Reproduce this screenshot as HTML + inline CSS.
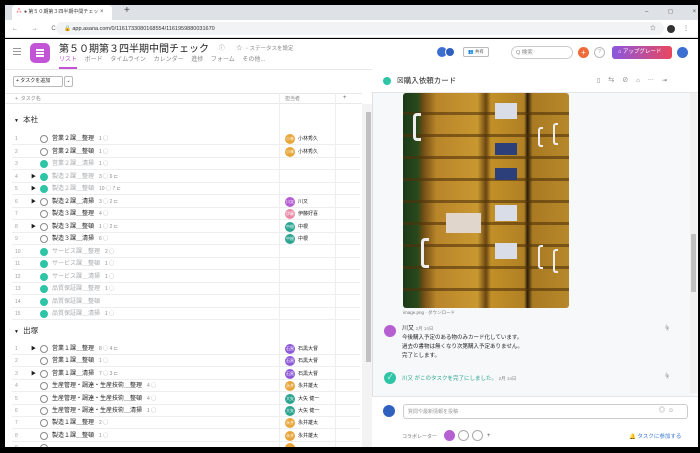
<!DOCTYPE html>
<html style="overflow:hidden;width:700px;height:453px"><head><meta charset="utf-8"><style>
*{margin:0;padding:0;box-sizing:border-box}
body{width:700px;height:453px;overflow:hidden;background:#000;position:relative;font-family:"Liberation Sans","Noto Sans CJK JP",sans-serif;color:#1e1f21}
.a{position:absolute;white-space:nowrap}
.t{font-size:6px;line-height:8px}
.row{position:absolute;left:12px;width:348px;height:12px;border-bottom:1px solid #eceef0;font-size:6px;line-height:12px}
.row .n{position:absolute;left:3px;color:#9ca0a4;font-size:5px}
.row .ar{position:absolute;left:19px;font-size:5px}
.row .ck{position:absolute;left:28px;top:2px;width:8px;height:8px;border-radius:50%;border:1px solid #8a8b8c}
.row .ck.d{background:#2ec4a6;border-color:#2ec4a6}
.row .nm{position:absolute;left:40px}
.row.g .nm{color:#a8abae}
.row .c{color:#8a8d90;margin-left:5px;font-size:5px}
.row .av{position:absolute;left:273px;top:1px;width:10px;height:10px;border-radius:50%;font-size:4px;color:#fff;text-align:center;line-height:10px}
.row .an{position:absolute;left:286px;font-size:5px}
.vl{position:absolute;width:1px;background:#eceef0}
.o{background:#e8a53a}.p{background:#b65fd3}.k{background:#e88aa8}.tl{background:#2aa38f}.pu{background:#8e5ad8}
</style></head><body>
<div class="a" style="left:5px;top:5px;width:693px;height:15px;background:#dee1e6"></div>
<div class="a" style="left:12px;top:5px;width:100px;height:15px;background:#fff;border-radius:4px 4px 0 0"></div>
<div class="a t" style="left:16px;top:8px;color:#e8384f">⁂</div>
<div class="a t" style="left:24px;top:8px;font-size:5px;color:#444">● 第５０期第３四半期中間チェッ</div>
<div class="a t" style="left:100px;top:8px;color:#555">×</div>
<div class="a" style="left:124px;top:5px;font-size:10px;color:#444">+</div>
<div class="a t" style="left:645px;top:8px;color:#555;letter-spacing:9px">– ◻ ×</div>
<div class="a" style="left:5px;top:20px;width:693px;height:18px;background:#fff;border-bottom:1px solid #ddd"></div>
<div class="a t" style="left:12px;top:25px;color:#666;letter-spacing:6px">← → C</div>
<div class="a" style="left:56px;top:22px;width:608px;height:13px;background:#f1f3f4;border-radius:7px"></div>
<div class="a t" style="left:64px;top:25px;font-size:5.5px;color:#333">🔒 app.asana.com/0/1161733080168554/1161959880031670</div>
<div class="a t" style="left:650px;top:25px;color:#555">☆</div>
<div class="a" style="left:667px;top:25px;width:8px;height:8px;border-radius:50%;background:#333"></div>
<div class="a t" style="left:683px;top:25px;color:#555">⋮</div>
<div class="a" style="left:5px;top:39px;width:693px;height:408px;background:#fff"></div>
<div class="a" style="left:13px;top:48px;width:8px;height:1px;background:#999;box-shadow:0 3px #999,0 6px #999"></div>
<div class="a" style="left:30px;top:43px;width:20px;height:20px;border-radius:5px;background:#c255d6"></div>
<div class="a" style="left:36px;top:49px;width:8px;height:1.5px;background:#fff;box-shadow:0 3px #fff,0 6px #fff"></div>
<div class="a" style="left:59px;top:43px;font-size:10px;line-height:13px">第５０期第３四半期中間チェック</div>
<div class="a t" style="left:202px;top:45px;color:#888;letter-spacing:5px">⌄ ⓘ ☆</div>
<div class="a t" style="left:246px;top:45px;color:#888;font-size:5.5px">◦ ステータスを設定</div>
<div class="a t" style="left:59px;top:56px;font-size:6px;color:#888;word-spacing:6px"><span style="color:#c255d6">リスト</span> ボード タイムライン カレンダー 進捗 フォーム その他...</div>
<div class="a" style="left:59px;top:67px;width:18px;height:2px;background:#c255d6"></div>
<div class="a" style="left:5px;top:69px;width:367px;height:1px;background:#e8e8e8"></div>
<div class="a" style="left:437px;top:47px;width:10px;height:10px;border-radius:50%;background:#3d6fd1"></div>
<div class="a" style="left:445px;top:47px;width:10px;height:10px;border-radius:50%;background:#2f5fbf;border:1px solid #fff"></div>
<div class="a t" style="left:463px;top:47px;width:26px;height:10px;border:1px solid #bbb;border-radius:2px;font-size:4.5px;text-align:center;line-height:8px;color:#555">👥 共有</div>
<div class="a" style="left:511px;top:46px;width:62px;height:13px;border:1px solid #ccc;border-radius:7px"></div>
<div class="a t" style="left:516px;top:49px;font-size:5.5px;color:#888">Q 検索</div>
<div class="a" style="left:578px;top:47px;width:11px;height:11px;border-radius:50%;background:#f06a3a;color:#fff;font-size:8px;text-align:center;line-height:11px">+</div>
<div class="a" style="left:594px;top:47px;width:11px;height:11px;border-radius:50%;border:1px solid #bbb;color:#999;font-size:5px;text-align:center;line-height:9px">?</div>
<div class="a" style="left:612px;top:46px;width:60px;height:13px;border-radius:3px;background:linear-gradient(90deg,#8a57e0,#e9475e);color:#fff;font-size:5.5px;line-height:13px;padding-left:6px">⌂ アップグレード</div>
<div class="a" style="left:677px;top:47px;width:11px;height:11px;border-radius:50%;background:#3d6fd1"></div>
<div class="a t" style="left:13px;top:76px;width:50px;height:11px;border:1px solid #bbb;border-radius:2px;font-size:5px;line-height:9px;padding-left:2px">+ タスクを追加</div>
<div class="a t" style="left:64px;top:76px;width:9px;height:11px;border:1px solid #bbb;border-radius:2px;font-size:5px;line-height:9px;text-align:center">⌄</div>
<div class="a" style="left:5px;top:93px;width:357px;height:11px;border-top:1px solid #e8e8e8;border-bottom:1px solid #e8e8e8"></div>
<div class="a t" style="left:15px;top:95px;color:#888;font-size:5px">+ &nbsp;タスク名</div>
<div class="a t" style="left:285px;top:95px;color:#888;font-size:5px">担当者</div>
<div class="a t" style="left:343px;top:94px;color:#666">+</div>
<div class="vl" style="left:279px;top:93px;height:354px"></div>
<div class="vl" style="left:335px;top:93px;height:354px"></div>
<div class="a" style="left:14px;top:114px;font-size:7.5px"><span style="font-size:5px">▼</span>&nbsp; 本社</div>
<div class="a" style="left:14px;top:325px;font-size:7.5px"><span style="font-size:5px">▼</span>&nbsp; 出塚</div>

<div class="row" style="top:133px"><span class="n">1</span><span class="ck"></span><span class="nm">営業２課＿整理<span class="c">1 ◯</span></span><span class="av o">小林</span><span class="an">小林秀久</span></div>
<div class="row" style="top:145.5px"><span class="n">2</span><span class="ck"></span><span class="nm">営業２課＿整頓<span class="c">1 ◯</span></span><span class="av o">小林</span><span class="an">小林秀久</span></div>
<div class="row g" style="top:158px"><span class="n">3</span><span class="ck d"></span><span class="nm">営業２課＿清掃<span class="c">1 ◯</span></span></div>
<div class="row g" style="top:170.5px"><span class="n">4</span><span class="ar">▶</span><span class="ck d"></span><span class="nm">製造２課＿整理<span class="c">3 ◯ 6 ⊏</span></span></div>
<div class="row g" style="top:183px"><span class="n">5</span><span class="ar">▶</span><span class="ck d"></span><span class="nm">製造２課＿整頓<span class="c">10 ◯ 7 ⊏</span></span></div>
<div class="row" style="top:195.5px"><span class="n">6</span><span class="ar">▶</span><span class="ck"></span><span class="nm">製造２課＿清掃<span class="c">3 ◯ 2 ⊏</span></span><span class="av p">川又</span><span class="an">川又</span></div>
<div class="row" style="top:208px"><span class="n">7</span><span class="ck"></span><span class="nm">製造３課＿整理<span class="c">4 ◯</span></span><span class="av k">伊藤</span><span class="an">伊藤好喜</span></div>
<div class="row" style="top:220.5px"><span class="n">8</span><span class="ar">▶</span><span class="ck"></span><span class="nm">製造３課＿整頓<span class="c">1 ◯ 2 ⊏</span></span><span class="av tl">中根</span><span class="an">中根</span></div>
<div class="row" style="top:233px"><span class="n">9</span><span class="ck"></span><span class="nm">製造３課＿清掃<span class="c">6 ◯</span></span><span class="av tl">中根</span><span class="an">中根</span></div>
<div class="row g" style="top:245.5px"><span class="n">10</span><span class="ck d"></span><span class="nm">サービス課＿整理<span class="c">2 ◯</span></span></div>
<div class="row g" style="top:258px"><span class="n">11</span><span class="ck d"></span><span class="nm">サービス課＿整頓<span class="c">1 ◯</span></span></div>
<div class="row g" style="top:270.5px"><span class="n">12</span><span class="ck d"></span><span class="nm">サービス課＿清掃<span class="c">1 ◯</span></span></div>
<div class="row g" style="top:283px"><span class="n">13</span><span class="ck d"></span><span class="nm">品質保証課＿整理<span class="c">1 ◯</span></span></div>
<div class="row g" style="top:295.5px"><span class="n">14</span><span class="ck d"></span><span class="nm">品質保証課＿整頓</span></div>
<div class="row g" style="top:308px"><span class="n">15</span><span class="ck d"></span><span class="nm">品質保証課＿清掃<span class="c">1 ◯</span></span></div>

<div class="row" style="top:343px"><span class="n">1</span><span class="ar">▶</span><span class="ck"></span><span class="nm">営業１課＿整理<span class="c">8 ◯ 4 ⊏</span></span><span class="av pu">石黒</span><span class="an">石黒大督</span></div>
<div class="row" style="top:355.4px"><span class="n">2</span><span class="ck"></span><span class="nm">営業１課＿整頓<span class="c">1 ◯</span></span><span class="av pu">石黒</span><span class="an">石黒大督</span></div>
<div class="row" style="top:367.8px"><span class="n">3</span><span class="ar">▶</span><span class="ck"></span><span class="nm">営業１課＿清掃<span class="c">7 ◯ 3 ⊏</span></span><span class="av pu">石黒</span><span class="an">石黒大督</span></div>
<div class="row" style="top:380.2px"><span class="n">4</span><span class="ck"></span><span class="nm">生産管理・調達・生産技術＿整理<span class="c">4 ◯</span></span><span class="av o">永井</span><span class="an">永井雄太</span></div>
<div class="row" style="top:392.6px"><span class="n">5</span><span class="ck"></span><span class="nm">生産管理・調達・生産技術＿整頓<span class="c">4 ◯</span></span><span class="av tl">大矢</span><span class="an">大矢 健一</span></div>
<div class="row" style="top:405px"><span class="n">6</span><span class="ck"></span><span class="nm">生産管理・調達・生産技術＿清掃<span class="c">1 ◯</span></span><span class="av tl">大矢</span><span class="an">大矢 健一</span></div>
<div class="row" style="top:417.4px"><span class="n">7</span><span class="ck"></span><span class="nm">製造１課＿整理<span class="c">2 ◯</span></span><span class="av o">永井</span><span class="an">永井雄太</span></div>
<div class="row" style="top:429.8px"><span class="n">8</span><span class="ck"></span><span class="nm">製造１課＿整頓<span class="c">1 ◯</span></span><span class="av o">永井</span><span class="an">永井雄太</span></div>
<div class="row" style="top:442.2px;height:5px;overflow:hidden;border:none"><span class="n">9</span><span class="ck"></span><span class="av o"></span></div>
<div class="a" style="left:362px;top:104px;width:10px;height:343px;background:#f3f3f3"></div>
<div class="a" style="left:366px;top:112px;width:5px;height:250px;background:#c1c1c1"></div>
<div class="a" style="left:372px;top:69px;width:326px;height:378px;background:#f6f8f9;border-left:1px solid #e0e0e0"></div>
<div class="a" style="left:372px;top:69px;width:326px;height:24px;background:#fff;border-bottom:1px solid #e5e5e5"></div>
<div class="a" style="left:383px;top:77px;width:8px;height:8px;border-radius:50%;background:#2ec4a6"></div>
<div class="a" style="left:397px;top:76px;font-size:7.5px;line-height:10px">☒購入依頼カード</div>
<div class="a t" style="left:597px;top:77px;color:#777;letter-spacing:8px">▯⇆⊘⌂⋯⇥</div>
<div class="a" style="left:403px;top:93px;width:166px;height:215px;border-radius:3px;overflow:hidden;background:linear-gradient(90deg,#1b3a1a 0,#2a4a1c 9%,#6d4c14 12%,#b8852a 20%,#c99830 45%,#6a4612 50%,#c29028 53%,#b08024 73%,#2a1c0a 75%,#a97a22 78%,#b7882a 100%)">
 <div style="position:absolute;left:0;top:0;width:100%;height:100%;background:repeating-linear-gradient(180deg,transparent 0 19px,rgba(80,50,10,.6) 19px 22px)"></div>
 <div style="position:absolute;left:92px;top:10px;width:22px;height:16px;background:#d8dde8"></div>
 <div style="position:absolute;left:92px;top:50px;width:22px;height:12px;background:#2d3f7a"></div>
 <div style="position:absolute;left:92px;top:75px;width:22px;height:12px;background:#2d3f7a"></div>
 <div style="position:absolute;left:92px;top:112px;width:22px;height:16px;background:#d8dde8"></div>
 <div style="position:absolute;left:92px;top:150px;width:22px;height:16px;background:#d8dde8"></div>
 <div style="position:absolute;left:43px;top:120px;width:35px;height:20px;background:#e0d6cc"></div>
 <div style="position:absolute;left:10px;top:20px;width:8px;height:28px;border:3px solid #eee;border-right:none;border-radius:4px 0 0 4px"></div>
 <div style="position:absolute;left:18px;top:145px;width:8px;height:30px;border:3px solid #eee;border-right:none;border-radius:4px 0 0 4px"></div>
 <div style="position:absolute;left:135px;top:34px;width:5px;height:20px;border:2px solid #eee;border-right:none;border-radius:3px 0 0 3px"></div>
 <div style="position:absolute;left:150px;top:30px;width:5px;height:22px;border:2px solid #eee;border-right:none;border-radius:3px 0 0 3px"></div>
 <div style="position:absolute;left:135px;top:152px;width:5px;height:24px;border:2px solid #eee;border-right:none;border-radius:3px 0 0 3px"></div>
 <div style="position:absolute;left:150px;top:156px;width:5px;height:24px;border:2px solid #eee;border-right:none;border-radius:3px 0 0 3px"></div>
</div>
<div class="a" style="left:403px;top:310px;font-size:4.5px;color:#777">image.png · ダウンロード</div>
<div class="a" style="left:384px;top:325px;width:12px;height:12px;border-radius:50%;background:#b65fd3"></div>
<div class="a" style="left:402px;top:325px;font-size:6px;line-height:8px">川又 <span style="color:#888;font-size:4.5px">2月 14日</span></div>
<div class="a" style="left:402px;top:334px;font-size:5.5px;line-height:9px">今後購入予定のある物のみカード化しています。<br>過去の書物は無くなり次第購入予定ありません。<br>完了とします。</div>
<div class="a t" style="left:664px;top:325px;color:#666">☝</div>
<div class="a" style="left:384px;top:372px;width:12px;height:12px;border-radius:50%;background:#2ec4a6;color:#fff;font-size:7px;text-align:center;line-height:12px">✓</div>
<div class="a" style="left:402px;top:374px;font-size:5.5px;color:#2aa38f">川又 がこのタスクを完了にしました。 <span style="color:#888;font-size:4.5px">2月 14日</span></div>
<div class="a t" style="left:664px;top:373px;color:#666">☝</div>
<div class="a" style="left:690px;top:93px;width:7px;height:300px;background:#f0f0f0"></div>
<div class="a" style="left:691px;top:234px;width:5px;height:58px;background:#c1c1c1"></div>
<div class="a" style="left:372px;top:396px;width:326px;height:51px;background:#fff;border-top:1px solid #e5e5e5"></div>
<div class="a" style="left:383px;top:405px;width:12px;height:12px;border-radius:50%;background:#3061bf"></div>
<div class="a" style="left:403px;top:404px;width:285px;height:15px;border:1px solid #ccc;border-radius:3px;background:#fff"></div>
<div class="a" style="left:408px;top:408px;font-size:5px;color:#999">質問や最新情報を投稿</div>
<div class="a t" style="left:659px;top:407px;color:#888;letter-spacing:3px">◎☺</div>
<div class="a" style="left:402px;top:433px;font-size:5px;color:#777">コラボレーター</div>
<div class="a" style="left:444px;top:430px;width:11px;height:11px;border-radius:50%;background:#b65fd3"></div>
<div class="a" style="left:458px;top:430px;width:11px;height:11px;border-radius:50%;border:1px solid #aaa"></div>
<div class="a" style="left:472px;top:430px;width:11px;height:11px;border-radius:50%;border:1px solid #aaa"></div>
<div class="a t" style="left:487px;top:432px;color:#555">+</div>
<div class="a" style="left:629px;top:432px;font-size:5.5px;color:#3b7ad9">🔔 タスクに参加する</div>
<div class="a" style="left:0;top:447px;width:700px;height:6px;background:#000;z-index:99"></div>
</body></html>
